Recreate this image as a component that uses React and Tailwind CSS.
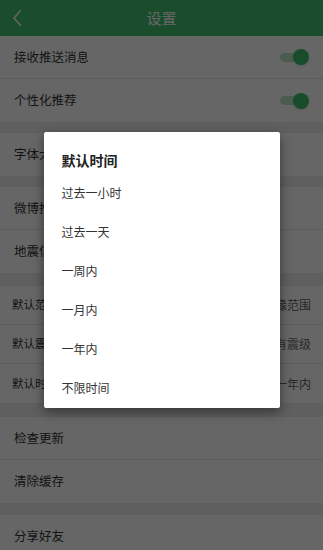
import React from 'react';

const font = { fontFamily: '"Noto Sans CJK SC", "Noto Sans", sans-serif' };

const Toggle = () => (
  <div className="relative w-[30px] h-[16px] flex items-center">
    <div className="w-[24px] h-[9px] rounded-full bg-[#bfe3c9] ml-[1px]" />
    <div className="absolute right-0 top-0 w-[16px] h-[16px] rounded-full bg-[#3fbf6c] shadow" />
  </div>
);

const Row = ({ label, right, small, last }) => (
  <div
    className={`flex items-center justify-between bg-white ${small ? 'h-[39px] pl-3 pr-3' : 'h-[43px] pl-[14px] pr-[14px]'} ${last ? '' : 'border-b border-[#e6e6e6]'}`}
  >
    <span className={`${small ? 'text-[11.5px]' : 'text-[12.5px]'} text-[#333]`}>{label}</span>
    {right}
  </div>
);

const Gap = ({ h = 'h-[11px]' }) => <div className={`${h} bg-[#ededed]`} />;

const options = ['过去一小时', '过去一天', '一周内', '一月内', '一年内', '不限时间'];

export default function App() {
  return (
    <div className="relative w-[323px] h-[550px] overflow-hidden bg-[#ededed]" style={font}>
      {/* 顶部栏 */}
      <div className="h-[36px] bg-[#43c06f] flex items-center relative">
        <svg className="absolute left-[12px] top-[9px]" width="11" height="18" viewBox="0 0 11 18">
          <path d="M9 1 L2 9 L9 17" fill="none" stroke="#fff" strokeWidth="1.4" />
        </svg>
        <div className="flex-1 text-center text-white text-[15px]">设置</div>
      </div>

      <Row label="接收推送消息" right={<Toggle />} />
      <Row label="个性化推荐" right={<Toggle />} last />
      <Gap />
      <Row label="字体大小" last />
      <Gap />
      <Row label="微博推送" />
      <Row label="地震信息" last />
      <Gap h="h-[13px]" />
      <Row small label="默认范围" right={<span className="text-[12px] text-[#666]">震缘范围</span>} />
      <Row small label="默认震级" right={<span className="text-[12px] text-[#666]">所有震级</span>} />
      <Row small label="默认时间" right={<span className="text-[12px] text-[#666]">一年内</span>} last />
      <Gap h="h-[14px]" />
      <Row label="检查更新" />
      <Row label="清除缓存" last />
      <Gap h="h-[12px]" />
      <Row label="分享好友" last />

      {/* 遮罩 + 弹窗 */}
      <div className="absolute inset-0 bg-black/60 flex justify-center items-start pt-[132px]">
        <div className="w-[236px] bg-white rounded-[2px] shadow-[0_4px_12px_rgba(0,0,0,0.45)] pt-[17px] pb-[1px]">
          <div className="pl-[18px] text-[14px] font-bold text-[#222] leading-[22px]">默认时间</div>
          <div className="mt-[2px]">
            {options.map((o) => (
              <div key={o} className="h-[39px] flex items-center pl-[18px] text-[12px] text-[#333]">
                {o}
              </div>
            ))}
          </div>
        </div>
      </div>
    </div>
  );
}
